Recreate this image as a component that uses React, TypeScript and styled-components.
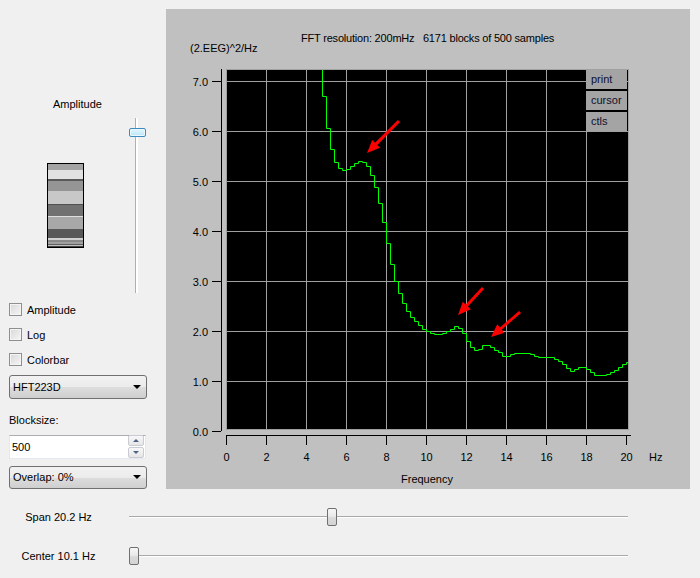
import React from 'react';
import styled, { createGlobalStyle } from 'styled-components';

const GlobalStyle = createGlobalStyle`
  html, body {
    margin: 0;
    padding: 0;
    background: #f0f0f0;
  }
  body {
    font-family: "Liberation Sans", Arial, sans-serif;
    font-size: 11px;
    color: #000;
  }
`;

const Window = styled.div`
  width: 700px;
  height: 578px;
  padding-top: 9px;
  box-sizing: border-box;
  background: #f0f0f0;
  overflow: hidden;
`;

const TopRow = styled.div`
  display: flex;
  height: 480px;
`;

const LeftPanel = styled.div`
  width: 166px;
  display: flex;
  flex-direction: column;
`;

const AmpLabel = styled.div`
  margin-top: 89px;
  padding-left: 53px;
  line-height: 13px;
  height: 13px;
`;

const AmpRow = styled.div`
  margin-top: 7px;
  height: 175px;
  display: flex;
  align-items: center;
`;

const Colorbar = styled.div`
  margin-left: 47px;
  width: 35px;
  border: 1px solid #000;
  display: flex;
  flex-direction: column;
`;

const Stripe = styled.div<{ $h: number; $c: string }>`
  height: ${(p) => p.$h}px;
  background: ${(p) => p.$c};
`;

const VSlider = styled.div`
  margin-left: 45px;
  width: 17px;
  height: 175px;
  position: relative;
`;

const VGroove = styled.div`
  position: absolute;
  left: 6px;
  top: 0;
  bottom: 0;
  width: 1px;
  background: #b0b0b0;
  border-right: 2px solid #fff;
`;

const VHandle = styled.div`
  position: absolute;
  left: 0;
  width: 15px;
  height: 7px;
  border: 1px solid #3c8cc0;
  border-radius: 2px;
  background: linear-gradient(#e4f6fd, #b9e6f8);
  box-shadow: inset 0 0 0 1px #eaf8fe;
`;

const Checks = styled.div`
  margin-top: 10px;
  padding-left: 9px;
  display: flex;
  flex-direction: column;
  gap: 12px;
`;

const CheckRow = styled.label`
  display: flex;
  align-items: center;
  height: 13px;
  gap: 5px;
`;

const Box = styled.span`
  width: 11px;
  height: 11px;
  border: 1px solid #8e8f8f;
  background: linear-gradient(135deg, #d8d8d8, #f6f6f6);
  box-shadow: inset 0 0 0 1px #f4f4f4;
`;

const Combo = styled.div<{ $top: number }>`
  margin-top: ${(p) => p.$top}px;
  margin-left: 9px;
  width: 129px;
  height: 22px;
  border: 1px solid #707070;
  border-radius: 3px;
  background: linear-gradient(#f2f2f2 0%, #ebebeb 50%, #dddddd 51%, #cfcfcf 100%);
  display: flex;
  align-items: center;
  justify-content: space-between;
  padding: 0 4px 0 3px;
`;

const ComboArrow = styled.span`
  width: 0;
  height: 0;
  border-left: 4px solid transparent;
  border-right: 4px solid transparent;
  border-top: 4px solid #000;
  margin-right: 1px;
`;

const FieldLabel = styled.div`
  margin-top: 15px;
  padding-left: 9px;
  line-height: 13px;
`;

const SpinBox = styled.div`
  margin-top: 8px;
  margin-left: 9px;
  width: 133px;
  height: 22px;
  border: 1px solid #e3e9ef;
  border-top-color: #abadb3;
  background: #fff;
  display: flex;
  align-items: center;
  justify-content: space-between;
  padding-left: 2px;
`;

const SpinButtons = styled.div`
  display: flex;
  flex-direction: column;
  gap: 1px;
  margin-right: 1px;
`;

const SpinButton = styled.div<{ $up?: boolean }>`
  width: 14px;
  height: 9px;
  border: 1px solid #c9cdd3;
  border-radius: 2px;
  background: linear-gradient(#f8f8f8, #e6e6e6);
  display: flex;
  align-items: center;
  justify-content: center;

  &::after {
    content: '';
    width: 0;
    height: 0;
    border-left: 3px solid transparent;
    border-right: 3px solid transparent;
    ${(p) => (p.$up ? 'border-bottom: 3px solid #4d6185;' : 'border-top: 3px solid #4d6185;')}
  }
`;

const ChartPanel = styled.div`
  width: 524px;
  height: 480px;
  background: #c0c0c0;
  position: relative;
`;

const ChartSvg = styled.svg`
  display: block;
  font-family: "Liberation Sans", Arial, sans-serif;
  font-size: 11px;
`;

const ButtonStack = styled.div`
  position: absolute;
  left: 420px;
  top: 61px;
  width: 41px;
  display: flex;
  flex-direction: column;
  gap: 2px;
  background: #000;
`;

const PlotButton = styled.div`
  height: 19px;
  line-height: 19px;
  padding-left: 5px;
  background: #a4a4a4;
  color: #10102c;
`;

const BottomArea = styled.div`
  padding-top: 18px;
  display: flex;
  flex-direction: column;
  gap: 19px;
`;

const SliderRow = styled.div`
  display: flex;
  align-items: center;
  height: 20px;
`;

const SliderLabel = styled.div`
  width: 117px;
  text-align: center;
  margin-right: 12px;
`;

const HTrack = styled.div`
  width: 499px;
  height: 20px;
  position: relative;
`;

const HGroove = styled.div`
  position: absolute;
  left: 0;
  right: 0;
  top: 9px;
  height: 1px;
  background: #a9a9a9;
  border-bottom: 1px solid #fff;
`;

const HHandle = styled.div`
  position: absolute;
  top: 1px;
  width: 8px;
  height: 16px;
  border: 1px solid #707070;
  border-radius: 2px;
  background: linear-gradient(#f6f6f6 0%, #eaeaea 45%, #d9d9d9 55%, #d4d4d4 100%);
`;

const stripes: [number, string][] = [
  [6, '#a4a4a4'],
  [9, '#e2e2e2'],
  [2, '#5a5a5a'],
  [10, '#959595'],
  [13, '#c8c8c8'],
  [1, '#505050'],
  [11, '#717171'],
  [1, '#dedede'],
  [12, '#a8a8a8'],
  [9, '#585858'],
  [2, '#d0d0d0'],
  [2, '#8a8a8a'],
  [2, '#a0a0a0'],
  [1, '#606060'],
  [1, '#c0c0c0'],
  [1, '#444444'],
];

// spectrum steps: [x, y] screen coords, curve holds y from x to next x
const steps: [number, number][] = [
  [322.5, 96.5], [326.5, 128.5], [330.5, 149.5], [334.5, 162.5], [338.5, 168.5],
  [342.5, 170.5], [346.5, 169.5], [350.5, 166.5], [354.5, 163.5], [358.5, 161.5],
  [362.5, 162.5], [366.5, 166.5], [370.5, 175.5], [374.5, 187.5], [378.5, 203.5],
  [382.5, 222.5], [386.5, 243.5], [390.5, 264.5], [394.5, 281.5], [398.5, 293.5],
  [402.5, 303.5], [406.5, 311.5], [410.5, 317.5], [414.5, 321.5], [418.5, 325.5],
  [422.5, 329.5], [426.5, 331.5], [430.5, 333.5], [434.5, 334.5], [442.5, 333.5],
  [446.5, 331.5], [450.5, 329.5], [454.5, 326.5], [458.5, 328.5], [462.5, 333.5],
  [466.5, 341.5], [470.5, 347.5], [474.5, 350.5], [478.5, 349.5], [482.5, 345.5],
  [490.5, 347.5], [494.5, 350.5], [498.5, 352.5], [502.5, 356.5], [510.5, 354.5],
  [514.5, 353.5], [530.5, 354.5], [534.5, 356.5], [538.5, 357.5], [554.5, 359.5],
  [558.5, 361.5], [562.5, 364.5], [566.5, 368.5], [570.5, 371.5], [574.5, 369.5],
  [578.5, 367.5], [586.5, 369.5], [590.5, 372.5], [594.5, 375.5], [606.5, 374.5],
  [610.5, 372.5], [614.5, 370.5], [618.5, 367.5], [622.5, 364.5], [626.5, 362.5],
];

const curvePath = () => {
  let d = `M${steps[0][0]} 70 V${steps[0][1]}`;
  for (let i = 1; i < steps.length; i++) {
    d += ` H${steps[i][0]} V${steps[i][1]}`;
  }
  return d + ' H628';
};

const arrowPoints = (x1: number, y1: number, x2: number, y2: number) => {
  const len = Math.hypot(x2 - x1, y2 - y1);
  const ux = (x2 - x1) / len;
  const uy = (y2 - y1) / len;
  const nx = -uy;
  const ny = ux;
  const s = 1.5;
  const h = 5.5;
  const bx = x2 - ux * 13;
  const by = y2 - uy * 13;
  const pts = [
    [x1 + nx * s, y1 + ny * s],
    [bx + nx * s, by + ny * s],
    [bx + nx * h, by + ny * h],
    [x2, y2],
    [bx - nx * h, by - ny * h],
    [bx - nx * s, by - ny * s],
    [x1 - nx * s, y1 - ny * s],
  ];
  return pts.map((p) => `${p[0].toFixed(1)},${p[1].toFixed(1)}`).join(' ');
};

const arrows: [number, number, number, number][] = [
  [399, 121, 367, 153],
  [483, 288, 458, 315],
  [520, 312, 491, 337],
];

const Spectrum: React.FC = () => {
  const yTicks = [7, 6, 5, 4, 3, 2, 1, 0];
  const xTicks = [0, 2, 4, 6, 8, 10, 12, 14, 16, 18, 20];
  return (
    <ChartSvg width={524} height={480} viewBox="166 9 524 480">
      <text x={301} y={42} fill="#000" letterSpacing={-0.2}>
        FFT resolution: 200mHz&#160;&#160; 6171 blocks of 500 samples
      </text>
      <text x={190} y={52} fill="#000">(2.EEG)^2/Hz</text>

      <rect x={226.5} y={69.5} width={402} height={360} fill="#000" stroke="#a0a0a0" />
      {[1, 2, 3, 4, 5, 6, 7].map((v) => (
        <line key={`h${v}`} x1={227} x2={628} y1={431.5 - v * 50} y2={431.5 - v * 50} stroke="#a0a0a0" />
      ))}
      {[1, 2, 3, 4, 5, 6, 7, 8, 9].map((k) => (
        <line key={`v${k}`} x1={226.5 + k * 40} x2={226.5 + k * 40} y1={70} y2={429} stroke="#a0a0a0" />
      ))}
      <path d={curvePath()} fill="none" stroke="#00ff00" strokeWidth={1} />
      {arrows.map((a, i) => (
        <polygon key={i} points={arrowPoints(a[0], a[1], a[2], a[3])} fill="#ff0000" />
      ))}

      <line x1={221.5} x2={221.5} y1={69} y2={431} stroke="#000" />
      {yTicks.map((v) => (
        <g key={`yt${v}`}>
          <line x1={212} x2={221} y1={431.5 - v * 50} y2={431.5 - v * 50} stroke="#000" />
          <text x={208} y={435.5 - v * 50} textAnchor="end" fill="#000">{v.toFixed(1)}</text>
        </g>
      ))}

      <line x1={226} x2={631} y1={435.5} y2={435.5} stroke="#000" />
      {xTicks.map((v) => (
        <g key={`xt${v}`}>
          <line x1={226.5 + v * 20} x2={226.5 + v * 20} y1={436} y2={445} stroke="#000" />
          <text x={226.5 + v * 20} y={461} textAnchor="middle" fill="#000">{v}</text>
        </g>
      ))}
      <text x={649} y={461} fill="#000">Hz</text>
      <text x={427} y={483} textAnchor="middle" fill="#000">Frequency</text>
    </ChartSvg>
  );
};

const HSlider: React.FC<{ value: number; min: number; max: number }> = ({ value, min, max }) => {
  const left = Math.round(((value - min) / (max - min)) * (499 - 10));
  return (
    <HTrack>
      <HGroove />
      <HHandle style={{ left }} />
    </HTrack>
  );
};

const App: React.FC = () => {
  return (
    <Window>
      <GlobalStyle />
      <TopRow>
        <LeftPanel>
          <AmpLabel>Amplitude</AmpLabel>
          <AmpRow>
            <Colorbar>
              {stripes.map(([h, c], i) => (
                <Stripe key={i} $h={h} $c={c} />
              ))}
            </Colorbar>
            <VSlider>
              <VGroove />
              <VHandle style={{ top: 10 }} />
            </VSlider>
          </AmpRow>
          <Checks>
            <CheckRow><Box />Amplitude</CheckRow>
            <CheckRow><Box />Log</CheckRow>
            <CheckRow><Box />Colorbar</CheckRow>
          </Checks>
          <Combo $top={9}>
            <span>HFT223D</span>
            <ComboArrow />
          </Combo>
          <FieldLabel>Blocksize:</FieldLabel>
          <SpinBox>
            <span>500</span>
            <SpinButtons>
              <SpinButton $up />
              <SpinButton />
            </SpinButtons>
          </SpinBox>
          <Combo $top={7}>
            <span>Overlap: 0%</span>
            <ComboArrow />
          </Combo>
        </LeftPanel>
        <ChartPanel>
          <Spectrum />
          <ButtonStack>
            <PlotButton>print</PlotButton>
            <PlotButton>cursor</PlotButton>
            <PlotButton>ctls</PlotButton>
          </ButtonStack>
        </ChartPanel>
      </TopRow>
      <BottomArea>
        <SliderRow>
          <SliderLabel>Span 20.2 Hz</SliderLabel>
          <HSlider value={20.2} min={0} max={50} />
        </SliderRow>
        <SliderRow>
          <SliderLabel>Center 10.1 Hz</SliderLabel>
          <HSlider value={0} min={0} max={50} />
        </SliderRow>
      </BottomArea>
    </Window>
  );
};

export default App;
